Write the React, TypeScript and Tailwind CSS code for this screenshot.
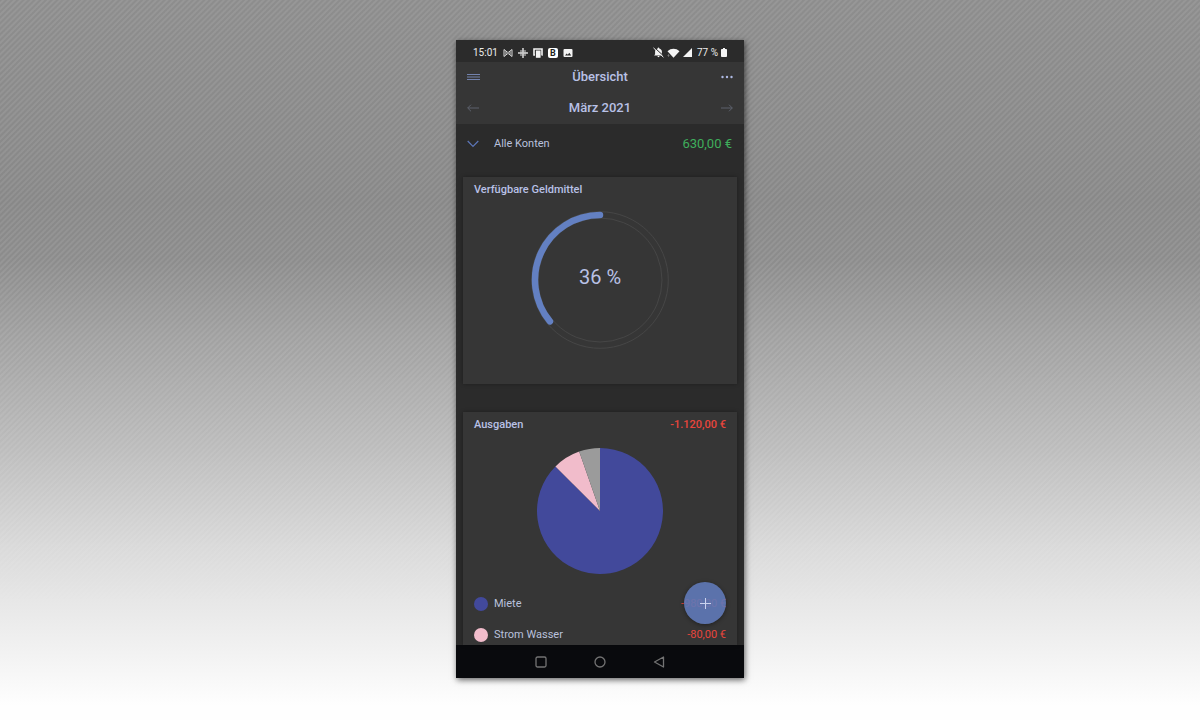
const expenses = [
  { name: 'Miete', amount: 980, label: '-980,00 €', color: '#42499b' },
  { name: 'Strom Wasser', amount: 80, label: '-80,00 €', color: '#f1bccb' },
  { name: 'Sonstiges', amount: 60, label: '-60,00 €', color: '#9b9b9b' },
];

const total = expenses.reduce((sum, e) => sum + e.amount, 0);

const pointAt = (share: number, c: number, r: number) => {
  const a = share * 2 * Math.PI;
  return `${(c + r * Math.sin(a)).toFixed(2)} ${(c - r * Math.cos(a)).toFixed(2)}`;
};

const StatusBar = () => (
  <div className="flex h-[22px] items-center justify-between bg-[#2b2b2b] px-[17px] pt-[3px] text-[10px] leading-4 text-[#ececec]">
    <div className="flex items-center gap-[5px]">
      <span>15:01</span>
      {/* Bowtie */}
      <svg className="size-[10px]" viewBox="0 0 10 10" fill="none" stroke="#dcdcdc">
        <path d="M1 1.500v7l3.400-2.700h1.200L9 8.500v-7L5.600 4.200H4.400Z M3 3.300v3.400 M7 3.300v3.400" />
      </svg>
      {/* Dot cross */}
      <svg className="size-[10px]" viewBox="0 0 10 10" fill="#eeeeee">
        <circle cx="5" cy="1" r=".9" />
        <circle cx="5" cy="9" r=".9" />
        <circle cx="1" cy="5" r=".9" />
        <circle cx="9" cy="5" r=".9" />
        <circle cx="3" cy="3" r=".8" />
        <circle cx="7" cy="3" r=".8" />
        <circle cx="3" cy="7" r=".8" />
        <circle cx="7" cy="7" r=".8" />
        <circle cx="3" cy="5" r="1" />
        <circle cx="7" cy="5" r="1" />
        <circle cx="5" cy="3" r="1" />
        <circle cx="5" cy="7" r="1" />
        <circle cx="5" cy="5" r="1.1" />
      </svg>
      {/* Paper roll */}
      <svg className="size-[10px]" viewBox="0 0 10 10" fill="none" stroke="#f4f4f4" strokeWidth="1.6">
        <path d="M2 7H1V1h8v6H8.500" />
        <path d="M3.500 3h3.500v6.200H3.500Z" fill="#f4f4f4" strokeWidth="1.2" />
      </svg>
      <span className="flex size-[10px] items-center justify-center rounded-xs bg-white text-[9px] font-bold leading-[10px] text-[#222]">
        B
      </span>
      {/* Photo */}
      <svg className="size-[10px]" viewBox="0 0 10 10">
        <rect x=".5" y="1" width="9" height="8" rx="1" fill="#f4f4f4" />
        <path d="M2 7.500 3.700 5.400 4.800 6.700 6.300 4.800 8.200 7.500Z" fill="#2b2b2b" />
      </svg>
    </div>
    <div className="flex items-center gap-[3px]">
      {/* Muted bell */}
      <svg className="size-[11px]" viewBox="0 0 11 11" fill="#f4f4f4">
        <path d="M5.5.6c.5 0 .8.3.8.8 1.600.4 2.600 1.600 2.600 3.200v2.600l1 1.400H1.100l1-1.400V4.600C2.100 3 3.100 1.800 4.700 1.400c0-.5.3-.8.8-.8Z M4.500 9.100h2c0 .7-.4 1.200-1 1.200s-1-.5-1-1.200Z" />
        <path d="M1.200.3 11 9.300" stroke="#2b2b2b" />
        <path d="M.5.9 10.400 10.200" stroke="#f4f4f4" />
      </svg>
      <svg className="h-[10px] w-[13px]" viewBox="0 0 13 10" fill="#f4f4f4">
        <path d="M.5 3.200C4-.1 9-.1 12.500 3.200L6.500 9.700Z" />
        <path d="M1.500 6v3M.4 7.500h2.200" stroke="#8a8a8a" strokeWidth=".6" />
      </svg>
      <svg className="size-[9px]" viewBox="0 0 9 9" fill="#f4f4f4">
        <path d="M9 0v9H0Z" />
      </svg>
      <span className="ml-[2px]">77 %</span>
      <svg className="h-[9px] w-[6px]" viewBox="0 0 6 9" fill="#f4f4f4">
        <path d="M2 0h2v1h1.200c.4 0 .8.4.8.8v6.400c0 .4-.4.8-.8.8H.8C.4 9 0 8.600 0 8.200V1.800C0 1.400.4 1 .8 1H2Z" />
      </svg>
    </div>
  </div>
);

const Header = () => (
  <header className="bg-[#363636] px-[9px] font-medium text-[#b9c1e6]">
    <div className="flex h-[30px] items-center justify-between">
      <button aria-label="Menü" className="flex w-4 justify-center text-[#7282ad]">
        <svg className="h-[6px] w-[13px]" viewBox="0 0 13 6" stroke="currentColor">
          <path d="M0 .5h13M0 3h13M0 5.500h13" />
        </svg>
      </button>
      <h1 className="text-[13px] leading-4">Übersicht</h1>
      <button aria-label="Mehr" className="flex w-4 justify-center">
        <svg className="h-1 w-3" viewBox="0 0 12 4" fill="#aeb9e3">
          <circle cx="1.5" cy="2" r="1.2" />
          <circle cx="6" cy="2" r="1.2" />
          <circle cx="10.5" cy="2" r="1.2" />
        </svg>
      </button>
    </div>
    <div className="flex h-8 items-center justify-between">
      <button aria-label="Voriger Monat" className="flex w-4 justify-center text-[#5d616d]">
        <svg className="h-2 w-3" viewBox="0 0 12 8" fill="none" stroke="currentColor">
          <path d="M12 4H.7M4 .7.7 4 4 7.300" />
        </svg>
      </button>
      <h2 className="text-[13px] leading-4">März 2021</h2>
      <button aria-label="Nächster Monat" className="flex w-4 justify-center text-[#5d616d]">
        <svg className="h-2 w-3" viewBox="0 0 12 8" fill="none" stroke="currentColor">
          <path d="M0 4h11.300M8 .7 11.300 4 8 7.300" />
        </svg>
      </button>
    </div>
  </header>
);

const FundsRing = ({ percent }: { percent: number }) => (
  <div className="relative mx-auto mt-[13px] size-[138px]">
    <svg className="size-full" viewBox="0 0 138 138" fill="none">
      <circle cx="69" cy="69" r="68.3" stroke="#4a4a4a" strokeWidth=".8" />
      <circle cx="69" cy="69" r="62" stroke="#4a4a4a" strokeWidth=".8" />
      <path
        d={`M${pointAt(0, 69, 65)}A65 65 0 0 0 ${pointAt(1 - percent / 100, 69, 65)}`}
        stroke="#6380c2"
        strokeWidth="6.5"
        strokeLinecap="round"
      />
    </svg>
    <span className="absolute inset-x-0 top-[54px] text-center text-[20px] leading-6 text-[#b9c1e6]">
      {percent} %
    </span>
  </div>
);

const ExpensePie = () => {
  let start = 0;
  return (
    <svg className="mx-auto mt-[15px] size-[126px]" viewBox="0 0 126 126">
      {expenses.map((e) => {
        const end = start + e.amount / total;
        const large = end - start > 0.5 ? 1 : 0;
        const d = `M63 63L${pointAt(start, 63, 63)}A63 63 0 ${large} 1 ${pointAt(end, 63, 63)}Z`;
        start = end;
        return <path key={e.name} d={d} fill={e.color} />;
      })}
    </svg>
  );
};

const NavBar = () => (
  <nav className="flex h-[33px] items-center justify-center gap-[47px] bg-[#090a0d] text-[#737373]">
    <button aria-label="Letzte Apps">
      <svg className="size-3" viewBox="0 0 12 12" fill="none" stroke="currentColor" strokeWidth="1.3">
        <rect x="1" y="1" width="10" height="10" rx="1.5" />
      </svg>
    </button>
    <button aria-label="Startbildschirm">
      <svg className="size-3" viewBox="0 0 12 12" fill="none" stroke="currentColor" strokeWidth="1.3">
        <circle cx="6" cy="6" r="5" />
      </svg>
    </button>
    <button aria-label="Zurück">
      <svg className="size-3" viewBox="0 0 12 12" fill="none" stroke="currentColor" strokeWidth="1.3" strokeLinejoin="round">
        <path d="M10.500 1v10L1.500 6Z" />
      </svg>
    </button>
  </nav>
);

const App = () => {
  return (
    <div className="relative isolate min-h-screen bg-[linear-gradient(to_bottom,#959595_0%,#909090_28%,#949494_36%,#a8a8a8_47%,#c1c1c1_62%,#dcdcdc_76%,#f1f1f1_90%,#fefefe_98%)] px-4 py-10 font-['Roboto',sans-serif]">
      {/* Diagonal stripes, fading out towards the bottom */}
      <div className="absolute inset-0 -z-10 bg-[repeating-linear-gradient(135deg,rgba(0,0,0,0.05)_0px,rgba(0,0,0,0.05)_1px,rgba(255,255,255,0.02)_2px,rgba(255,255,255,0.02)_3px,rgba(0,0,0,0.05)_4px)] [mask-image:linear-gradient(to_bottom,black_35%,transparent_85%)]"></div>

      <div className="mx-auto w-full max-w-[288px] bg-[#2b2b2b] shadow-[1px_2px_6px_rgba(0,0,0,0.6)]">
        <StatusBar />
        <Header />

        <main className="relative px-[7px]">
          <button className="flex h-[39px] w-full items-center pl-1 pr-[5px] text-left">
            <svg className="mr-[15px] h-2 w-3" viewBox="0 0 12 8" fill="none" stroke="#5c76b8" strokeWidth="1.2">
              <path d="M.7 1 6 6.500 11.300 1" />
            </svg>
            <span className="text-[11px] leading-4 text-[#b9c1dd]">Alle Konten</span>
            <span className="ml-auto text-[13px] leading-4 text-[#3fae5c]">630,00 €</span>
          </button>

          <section className="mt-[14px] bg-[#363636] px-[11px] pb-[35px] pt-[5px] shadow-[0_0_4px_rgba(0,0,0,0.3)]">
            <h3 className="text-[11px] font-medium leading-4 text-[#b9c1e6]">Verfügbare Geldmittel</h3>
            <FundsRing percent={36} />
          </section>

          <section className="mt-7 bg-[#363636] px-[11px] pb-[2px] pt-[5px] shadow-[0_0_4px_rgba(0,0,0,0.3)]">
            <div className="flex justify-between text-[11px] font-medium leading-4">
              <h3 className="text-[#b9c1e6]">Ausgaben</h3>
              <span className="text-[#e8453c]">-1.120,00 €</span>
            </div>
            <ExpensePie />
            <ul className="mt-[22px] space-y-[15px] text-[11px] leading-4">
              {expenses.slice(0, 2).map((e) => (
                <li key={e.name} className="flex items-center">
                  <span className="mr-[6px] size-[14px] rounded-full" style={{ backgroundColor: e.color }}></span>
                  <span className="text-[#b9c1dd]">{e.name}</span>
                  <span className="ml-auto text-[#e8453c]">{e.label}</span>
                </li>
              ))}
            </ul>
          </section>

          <button
            aria-label="Neue Buchung"
            className="absolute bottom-[21px] right-[18px] flex size-[42px] items-center justify-center rounded-full bg-[#5f79b8]/90 shadow-[0_1px_4px_rgba(0,0,0,0.4)]"
          >
            <svg className="size-[11px]" viewBox="0 0 11 11" stroke="#c9d2ee">
              <path d="M5.500 0v11M0 5.500h11" />
            </svg>
          </button>
        </main>

        <NavBar />
      </div>
    </div>
  );
};

export default App;
